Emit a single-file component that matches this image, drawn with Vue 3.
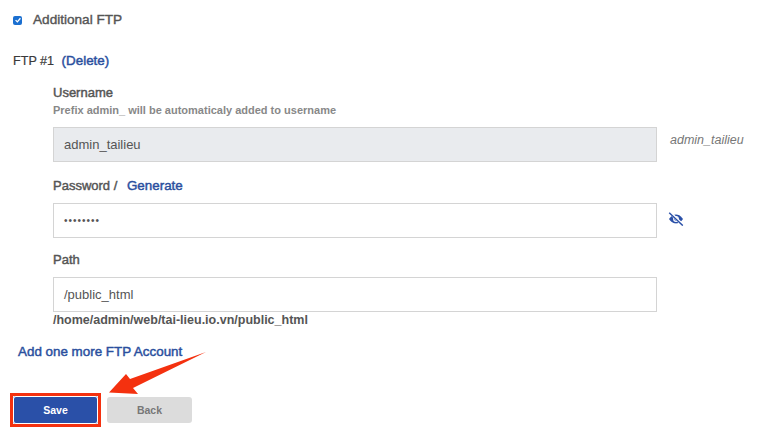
<script setup>
const root = 'admin_tailieu'
</script>

<template>
  <div class="page">
    <label class="check-row">
      <span class="check">
        <svg viewBox="0 0 10 10" width="10" height="10"><path d="M2 5.2 L4.2 7.4 L8 2.8" fill="none" stroke="#fff" stroke-width="1.6" /></svg>
      </span>
      <span class="check-label">Additional FTP</span>
    </label>

    <div class="ftp-title">FTP #1 <a class="link del">(Delete)</a></div>

    <div class="fields">
      <div class="lbl">Username</div>
      <div class="hint">Prefix admin_ will be automaticaly added to username</div>
      <div class="row first">
        <div class="input disabled">{{ root }}</div>
        <span class="suffix">{{ root }}</span>
      </div>

      <div class="lbl pw">Password / <a class="link gen">Generate</a></div>
      <div class="row second">
        <div class="input dots">••••••••</div>
        <svg class="eye" viewBox="0 0 16 14" width="16" height="14">
          <path d="M1 7 C3.500 3.400 6 2.600 8 2.600 C10 2.600 12.500 3.400 15 7 C12.500 10.600 10 11.400 8 11.400 C6 11.400 3.500 10.600 1 7 Z" fill="#2a50a8" />
          <circle cx="8" cy="7" r="2.900" fill="#fff" />
          <circle cx="8" cy="7" r="1.700" fill="#2a50a8" />
          <path d="M2 .6 L14.500 12.800" stroke="#fff" stroke-width="3" />
          <path d="M1.200 .8 L14.800 13.600" stroke="#2a50a8" stroke-width="1.400" />
        </svg>
      </div>

      <div class="lbl path">Path</div>
      <div class="input">/public_html</div>
      <div class="full">/home/admin/web/tai-lieu.io.vn/public_html</div>
    </div>

    <a class="link more">Add one more FTP Account</a>

    <div class="actions">
      <span class="highlight"><button class="btn save">Save</button></span>
      <button class="btn back">Back</button>
      <svg class="arrow" viewBox="0 0 97 42" width="97" height="42">
        <path d="M97 0 L24 36 L29 42 L0 40.500 L17 22 L21 27 Z" fill="#f4310f" />
      </svg>
    </div>
  </div>
</template>

<style>
html, body { margin: 0; background: #fff; }
</style>

<style scoped>
.page {
  width: 783px;
  height: 443px;
  overflow: hidden;
  box-sizing: border-box;
  padding: 12px 0 0 13px;
  font-family: "Liberation Sans", Arial, sans-serif;
  color: #444;
  font-size: 13px;
}
.check-row { display: flex; align-items: center; gap: 11px; height: 15px; }
.check {
  width: 9px; height: 9px; background: #1b6fd0; border-radius: 2px;
  display: flex; align-items: center; justify-content: center;
  margin-top: 1px;
}
.check svg { width: 8px; height: 8px; }
.check-label { font-size: 13.600px; color: #555; -webkit-text-stroke: .4px #555; }
.ftp-title { margin-top: 26px; font-size: 12.600px; line-height: 16px; color: #3a3a3a; -webkit-text-stroke: .2px #3a3a3a; }
.link { color: #2a4f9e; font-size: 13.400px; -webkit-text-stroke: .45px #2a4f9e; }
.del { margin-left: 4px; }
.fields { margin: 16px 0 0 40px; width: 604px; }
.lbl { font-size: 13px; color: #555; line-height: 16px; -webkit-text-stroke: .45px #555; }
.hint { font-size: 11px; font-weight: 700; color: #888; line-height: 13px; margin-top: 3px; -webkit-text-stroke: 0; }
.row { display: flex; align-items: center; width: 720px; position: relative; }
.row.first { margin-top: 10px; }
.row.second { margin-top: 9px; }
.input {
  box-sizing: border-box;
  width: 604px;
  flex: none;
  height: 35px;
  border: 1px solid #d4d4d4;
  padding: 0 10px;
  line-height: 33px;
  font-size: 13px;
  color: #555;
}
.disabled { background: #e9ebee; }
.dots { font-size: 10px; letter-spacing: 1px; color: #555; }
.suffix { margin-left: 13px; font-size: 12.500px; font-style: italic; color: #777; align-self: flex-start; margin-top: 6px; }
.pw { margin-top: 16px; }
.gen { margin-left: 6px; }
.eye { margin: 0 0 3px 11px; }
.path { margin-top: 14px; margin-bottom: 9px; }
.full { font-size: 12.500px; font-weight: 700; color: #555; line-height: 15px; margin-top: 1px; }
.more { display: block; margin: 16px 0 0 5px; line-height: 16px; }
.actions { position: relative; display: flex; align-items: center; gap: 6px; margin-top: 33px; margin-left: -3px; }
.highlight { display: block; border: 3px solid #f4310f; line-height: 0; }
.btn {
  border: 0; border-radius: 3px;
  font: 700 10.500px "Liberation Sans", Arial, sans-serif;
}
.save { width: 85px; height: 28px; background: #2a50a8; color: #fff; box-shadow: inset 0 0 0 1px #fff; }
.back { width: 85px; height: 26px; background: #dcdcdc; color: #777; }
.arrow { position: absolute; left: 99px; top: -41px; }
</style>
